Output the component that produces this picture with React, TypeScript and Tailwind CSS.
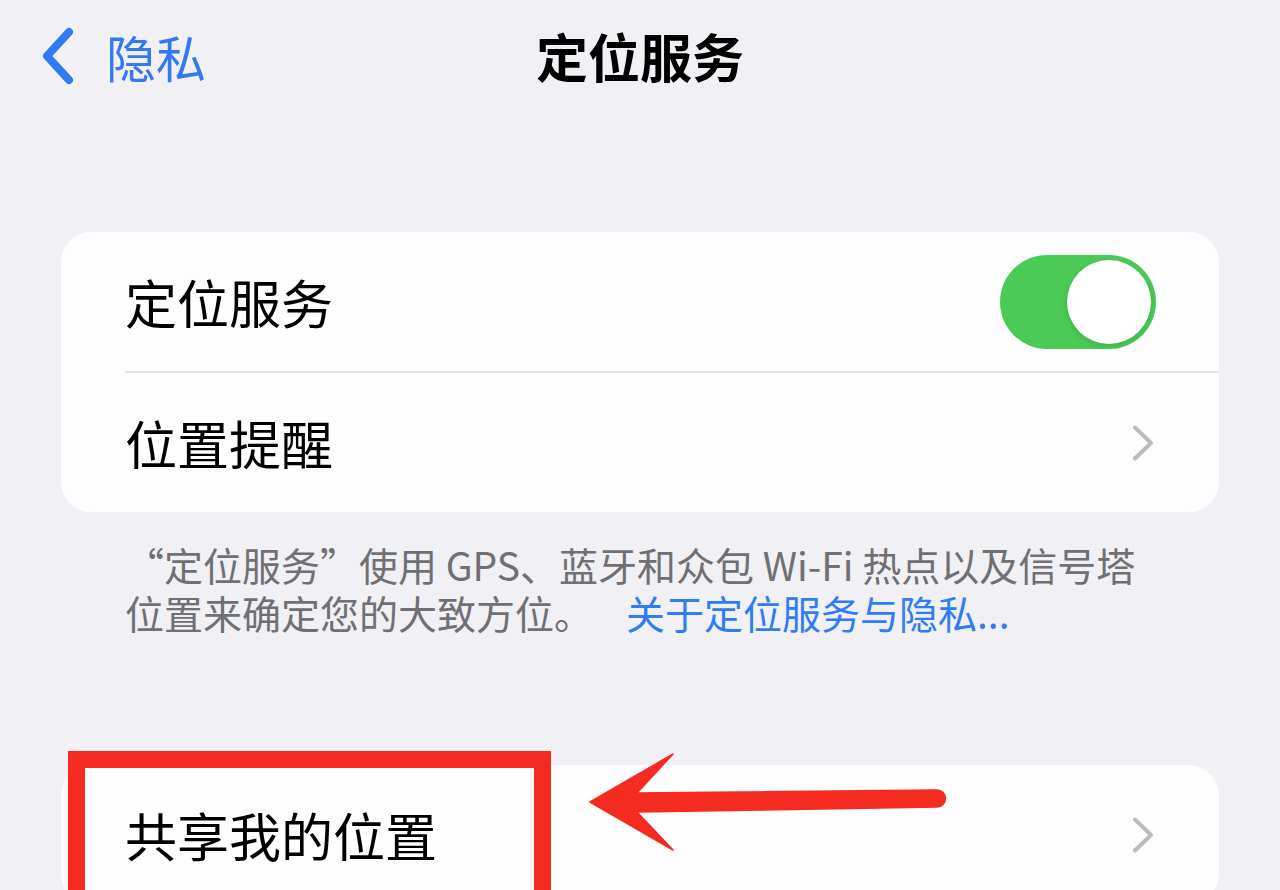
import React from 'react';

const font = { fontFamily: '"Noto Sans CJK SC", "Noto Sans", sans-serif' };

// Grey disclosure chevron at the end of a row
const Chevron = () => (
  <svg width="22" height="36" viewBox="0 0 22 36" fill="none">
    <path d="M3 2.5 L19 18 L3 33.5" stroke="#bcbcc0" strokeWidth="4" strokeLinecap="round" strokeLinejoin="round" />
  </svg>
);

const Toggle = ({ on = true }: { on?: boolean }) => (
  <div className={`w-[156px] h-[94px] rounded-full p-[5px] flex ${on ? 'bg-[#4cca58] justify-end' : 'bg-[#e5e5ea] justify-start'}`}>
    <div className="w-[84px] h-[84px] rounded-full bg-white shadow-[0_2px_6px_rgba(0,0,0,0.15)]" />
  </div>
);

const Row = ({ label, right }: { label: string; right: React.ReactNode }) => (
  <div className="h-[139px] pl-[64px] pr-[63px] flex items-center justify-between">
    <span className="text-[52px] leading-none text-black">{label}</span>
    {right}
  </div>
);

export default function App() {
  return (
    <div className="relative w-full h-[890px] overflow-hidden bg-[#f0f0f5]" style={font}>
      {/* Nav bar */}
      <div className="h-[112px] grid grid-cols-[1fr_auto_1fr] items-center">
        <div className="flex items-center pl-[42px] gap-[32px] text-[#3478f6]">
          <svg width="32" height="58" viewBox="0 0 32 58" fill="none">
            <path d="M27 5 L5 29 L27 53" stroke="#3478f6" strokeWidth="8" strokeLinecap="round" strokeLinejoin="round" />
          </svg>
          <span className="text-[50px] leading-none">隐私</span>
        </div>
        <h1 className="text-[52px] leading-none font-bold text-black">定位服务</h1>
        <div />
      </div>

      {/* Main group */}
      <div className="mt-[120px] mx-[61px] rounded-[30px] bg-[#fdfdfe] overflow-hidden">
        <Row label="定位服务" right={<Toggle />} />
        <div className="ml-[64px] h-[2px] bg-[#e2e2e6]" />
        <Row label="位置提醒" right={<div className="pr-[2px]"><Chevron /></div>} />
      </div>

      {/* Footer note */}
      <div className="mt-[28px] pl-[125px] pr-[60px] text-[39px] text-[#6f6f74] whitespace-nowrap flex flex-col">
        <div className="h-[48px] flex items-center">“定位服务”使用 GPS、蓝牙和众包 Wi-Fi 热点以及信号塔</div>
        <div className="h-[48px] flex items-center">
          <span>位置来确定您的大致方位。</span>
          <span className="ml-[33px] text-[#2f7cf6]">关于定位服务与隐私...</span>
        </div>
      </div>

      {/* Share my location group */}
      <div className="mt-[129px] mx-[61px] rounded-[30px] bg-[#fdfdfe] overflow-hidden">
        <Row label="共享我的位置" right={<div className="pr-[2px]"><Chevron /></div>} />
      </div>

      {/* Annotation: red frame */}
      <div className="absolute left-[68px] top-[751px] w-[483px] h-[200px] border-[17px] border-[#f52a20]" />

      {/* Annotation: red arrow */}
      <svg className="absolute left-[580px] top-[745px]" width="370" height="115" viewBox="0 0 370 115">
        <path
          d="M10 57 L93 9 L57 48 L357 45 A8.5 8.5 0 0 1 357 62 L57 67 L93 105 Z"
          fill="#f52a20"
          stroke="#f52a20"
          strokeWidth="1.5"
          strokeLinejoin="round"
        />
      </svg>
    </div>
  );
}
